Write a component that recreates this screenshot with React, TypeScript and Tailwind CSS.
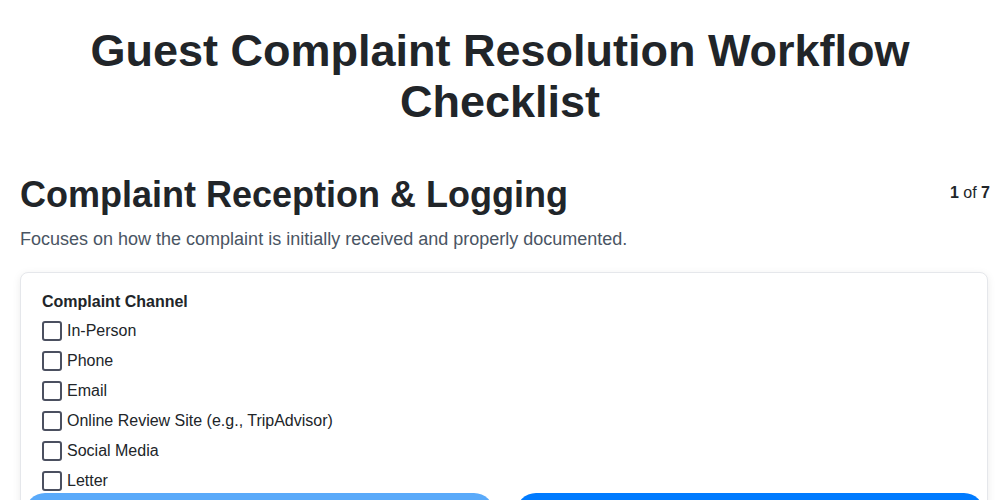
import React from "react";

const channels = [
  "In-Person",
  "Phone",
  "Email",
  "Online Review Site (e.g., TripAdvisor)",
  "Social Media",
  "Letter",
  "Other",
];

export default function App() {
  return (
    <div
      className="min-h-screen bg-white text-[#212529]"
      style={{ fontFamily: '"Liberation Sans", Arial, sans-serif' }}
    >
      <h1 className="pt-[25px] px-5 text-center text-[45px] font-bold leading-[51px] text-[#212529]">
        Guest Complaint Resolution Workflow
        <br />
        Checklist
      </h1>

      <section className="pl-5 pr-[10px] pt-[46px]">
        <div className="flex items-start justify-between">
          <h2 className="text-[36px] font-bold leading-[44px] text-[#212529]">
            Complaint Reception &amp; Logging
          </h2>
          <div className="pt-[8px] text-[16px] text-[#212529]">
            <span className="font-bold">1</span> of <span className="font-bold">7</span>
          </div>
        </div>
        <p className="mt-[10px] text-[18px] leading-[24px] text-[#4a5563]">
          Focuses on how the complaint is initially received and properly documented.
        </p>

        <div className="mt-[21px] mr-[2px] rounded-lg border border-[#e5e7eb] bg-white px-[21px] pt-[19px] pb-[60px] shadow-[0_2px_8px_rgba(0,0,0,0.08)]">
          <div className="text-[16px] font-bold leading-[20px] text-[#212529]">
            Complaint Channel
          </div>
          <ul className="mt-[4px] flex flex-col">
            {channels.map((c) => (
              <li key={c} className="flex h-[30px] items-center gap-[5px]">
                <span className="h-[20px] w-[20px] rounded-[3px] border-2 border-[#4b5060] bg-white" />
                <span className="text-[16px] text-[#212529]">{c}</span>
              </li>
            ))}
          </ul>
        </div>
      </section>

      <div className="fixed inset-x-0 bottom-[-60px] flex gap-[22px] pl-[25px] pr-[16px]">
        <button className="h-[67px] flex-1 rounded-[20px] bg-[#5aaafa] text-[16px] font-bold text-white">
          Previous
        </button>
        <button className="h-[67px] flex-1 rounded-[20px] bg-[#007bff] text-[16px] font-bold text-white">
          Next
        </button>
      </div>
    </div>
  );
}
